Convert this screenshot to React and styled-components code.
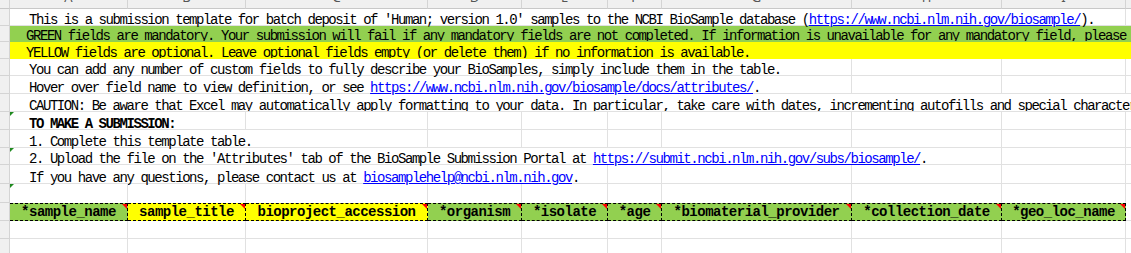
import styled, { createGlobalStyle } from 'styled-components';

const COLS = [118, 118, 182, 94, 86, 54, 190, 150, 124, 100];
const LETTERS = ['A', 'B', 'C', 'D', 'E', 'F', 'G', 'H', 'I', 'J'];
const GREEN = '#92d050';
const YELLOW = '#ffff00';
const GRID = '#e1e1e1';
const HEAD_LINE = '#d4d4d4';

const GlobalStyle = createGlobalStyle`
  html, body {
    margin: 0;
    padding: 0;
    background: #fff;
  }
`;

const Sheet = styled.div`
  width: 1131px;
  height: 253px;
  overflow: hidden;
  font-family: 'Liberation Mono', 'Courier New', monospace;
  font-size: 14px;
  letter-spacing: -1.44px;
  color: #000;
`;

const Row = styled.div`
  display: grid;
  grid-template-columns: 10px ${COLS.map((w) => w + 'px').join(' ')};
  height: ${(p) => p.$h}px;
  background: ${(p) => p.$fill || '#fff'};
`;

const Corner = styled.div`
  box-sizing: border-box;
  background: #f0f0f0;
  border-right: 1px solid ${HEAD_LINE};
  border-bottom: 1px solid #c8c8c8;
`;

const ColHead = styled.div`
  box-sizing: border-box;
  background: #f0f0f0;
  border-right: 1px solid ${HEAD_LINE};
  border-bottom: 1px solid #c8c8c8;
  display: flex;
  justify-content: center;
  align-items: flex-end;
  overflow: hidden;
  padding-bottom: 4px;
  font-family: 'Noto Sans', sans-serif;
  font-size: 13px;
  line-height: 13px;
  letter-spacing: 0;
  color: #555;
`;

const RowHead = styled.div`
  box-sizing: border-box;
  background: #f0f0f0;
  border-right: 1px solid ${HEAD_LINE};
  border-bottom: 1px solid ${HEAD_LINE};
`;

const Cell = styled.div`
  position: relative;
  box-sizing: border-box;
  grid-column: span ${(p) => p.$span || 1};
  display: flex;
  align-items: flex-end;
  padding: 0 0 0 ${(p) => p.$indent || 0}px;
  border-right: 1px solid ${(p) => (p.$filled ? 'transparent' : GRID)};
  border-bottom: 1px solid ${(p) => (p.$filled || p.$noBottom ? 'transparent' : GRID)};
  white-space: nowrap;
  overflow: ${(p) => (p.$clip ? 'hidden' : 'visible')};
  line-height: 10px;
  font-weight: ${(p) => (p.$bold ? 700 : 400)};
`;

const Text = styled.span`
  white-space: pre;
`;

const FieldCell = styled.div`
  position: relative;
  box-sizing: border-box;
  display: flex;
  align-items: flex-end;
  justify-content: center;
  padding-bottom: 3px;
  background: ${(p) => (p.$optional ? YELLOW : GREEN)};
  border-top: 1px dashed #000;
  border-bottom: 1px dashed #000;
  border-right: 1px dashed #000;
  white-space: nowrap;
  font-weight: 700;
  letter-spacing: -0.5px;
  line-height: 10px;
`;

const Link = styled.span`
  color: #0000ff;
  text-decoration: underline;
  text-underline-offset: 1px;
`;

const ErrorMark = styled.span`
  position: absolute;
  top: 0;
  left: 0;
  width: 0;
  height: 0;
  border-top: 4px solid #1f8a1f;
  border-right: 4px solid transparent;
`;

const NoteMark = styled.span`
  position: absolute;
  top: 0;
  right: 0;
  width: 0;
  height: 0;
  border-top: 5px solid #ff0000;
  border-left: 5px solid transparent;
`;

function Blank({ from = 0, noBottom }) {
  return COLS.slice(from).map((_, i) => <Cell key={i} $noBottom={noBottom} />);
}

const FIELDS = [
  ['*sample_name', false],
  ['sample_title', true],
  ['bioproject_accession', true],
  ['*organism', false],
  ['*isolate', false],
  ['*age', false],
  ['*biomaterial_provider', false],
  ['*collection_date', false],
  ['*geo_loc_name', false],
];

export default function App() {
  return (
    <>
      <GlobalStyle />
      <Sheet>
        <Row $h={9}>
          <Corner />
          {LETTERS.map((l) => (
            <ColHead key={l}>{l}</ColHead>
          ))}
        </Row>

        <Row $h={17}>
          <RowHead />
          <Cell $span={9} $indent={19}>
            <Text>
              {"This is a submission template for batch deposit of 'Human; version 1.0' samples to the NCBI BioSample database ("}
              <Link>https://www.ncbi.nlm.nih.gov/biosample/</Link>).
            </Text>
          </Cell>
          <Blank from={9} />
        </Row>

        <Row $h={16} $fill={GREEN}>
          <RowHead />
          <Cell $span={10} $indent={16} $filled $clip>
            <Text>
              {"GREEN fields are mandatory. Your submission will fail if any mandatory fields are not completed. If information is unavailable for any mandatory field, please enter 'not collected', 'not applicable' or 'missing' as appropriate."}
            </Text>
          </Cell>
        </Row>

        <Row $h={17} $fill={YELLOW}>
          <RowHead />
          <Cell $span={10} $indent={16} $filled $clip>
            <Text>
              YELLOW fields are optional. Leave optional fields empty (or delete them) if no information is available.
            </Text>
          </Cell>
        </Row>

        <Row $h={17}>
          <RowHead />
          <Cell $span={7} $indent={19}>
            <Text>
              You can add any number of custom fields to fully describe your BioSamples, simply include them in the table.
            </Text>
          </Cell>
          <Blank from={7} />
        </Row>

        <Row $h={18}>
          <RowHead />
          <Cell $span={7} $indent={19}>
            <Text>
              {'Hover over field name to view definition, or see '}
              <Link>https://www.ncbi.nlm.nih.gov/biosample/docs/attributes/</Link>.
            </Text>
          </Cell>
          <Blank from={7} />
        </Row>

        <Row $h={18}>
          <RowHead />
          <Cell $span={10} $indent={19} $clip>
            <Text>
              CAUTION: Be aware that Excel may automatically apply formatting to your data. In particular, take care with dates, incrementing autofills and special characters like / or -. Doublecheck that your text file is accurate before uploading to BioSample.
            </Text>
          </Cell>
        </Row>

        <Row $h={18}>
          <RowHead />
          <Cell $span={2} $indent={19} $bold>
            <ErrorMark />
            <Text>TO MAKE A SUBMISSION:</Text>
          </Cell>
          <Blank from={2} />
        </Row>

        <Row $h={18}>
          <RowHead />
          <Cell $span={3} $indent={19}>
            <Text>1. Complete this template table.</Text>
          </Cell>
          <Blank from={3} />
        </Row>

        <Row $h={17}>
          <RowHead />
          <Cell $span={8} $indent={19}>
            <ErrorMark />
            <Text>
              {"2. Upload the file on the 'Attributes' tab of the BioSample Submission Portal at "}
              <Link>https://submit.ncbi.nlm.nih.gov/subs/biosample/</Link>.
            </Text>
          </Cell>
          <Blank from={8} />
        </Row>

        <Row $h={19}>
          <RowHead />
          <Cell $span={5} $indent={19}>
            <Text>
              {'If you have any questions, please contact us at '}
              <Link>biosamplehelp@ncbi.nlm.nih.gov</Link>.
            </Text>
          </Cell>
          <Blank from={5} />
        </Row>

        <Row $h={19}>
          <RowHead />
          <Cell $noBottom>
            <ErrorMark />
          </Cell>
          <Blank from={1} noBottom />
        </Row>

        <Row $h={18}>
          <RowHead />
          {FIELDS.map(([name, optional]) => (
            <FieldCell key={name} $optional={optional}>
              {name}
              <NoteMark />
            </FieldCell>
          ))}
          <Cell />
        </Row>

        <Row $h={18}>
          <RowHead />
          <Blank />
        </Row>

        <Row $h={18}>
          <RowHead />
          <Blank />
        </Row>
      </Sheet>
    </>
  );
}
